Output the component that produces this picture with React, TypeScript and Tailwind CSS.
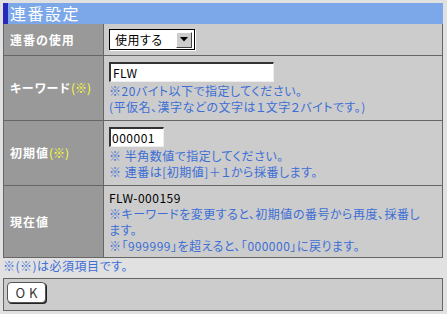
import React from "react";

const font = { fontFamily: '"Noto Sans CJK JP", "Noto Sans", sans-serif' };

function Label({ children }: { children: React.ReactNode }) {
  return (
    <div className="w-[100px] shrink-0 flex items-center pl-[6px] bg-[#999999] border-r border-[#666666] text-white font-bold text-[12px] tracking-[1px]">
      {children}
    </div>
  );
}

function Req() {
  return <span className="text-[#ffff33] font-normal tracking-normal">(※)</span>;
}

export default function App() {
  return (
    <div
      className="w-[447px] min-h-[314px] bg-[#e1e1e1] pt-[3px] pl-[3px] [font-feature-settings:'palt']"
      style={font}
    >
      <div className="w-[440px]">
        {/* title */}
        <div className="flex h-[21px] bg-[#7ca7e9]">
          <div className="w-[5px] bg-[#2828bc]" />
          <div className="pl-[2px] text-white text-[16px] leading-[21px] tracking-[1.5px]">連番設定</div>
        </div>

        {/* table */}
        <div className="border-x border-b border-[#666666] flex flex-col">
          {/* row 1 */}
          <div className="flex h-[32px] border-b border-[#666666]">
            <Label>連番の使用</Label>
            <div className="flex-1 bg-[#cccccc] flex items-center pl-[5px]">
              <div className="w-[86px] h-[21px] border border-[#000] bg-white flex items-center justify-between pl-[5px] pr-[2px] shadow-[1px_1px_0_#ffffff]">
                <span className="text-[12px] text-black leading-none tracking-[0.5px]">使用する</span>
                <div className="w-[16px] h-[16px] bg-[#cccccc] border-t border-l border-[#ffffff] border-b-[#444] border-r-[#444] border-b border-r flex items-center justify-center">
                  <svg width="8" height="5" viewBox="0 0 8 5"><polygon points="0,0 8,0 4,4.5" fill="#000" /></svg>
                </div>
              </div>
            </div>
          </div>

          {/* row 2 */}
          <div className="flex h-[65px] border-b border-[#666666]">
            <Label>キーワード<Req /></Label>
            <div className="flex-1 bg-[#cccccc] flex flex-col justify-center pl-[5px] tracking-[0.5px]">
              <div className="w-[165px] h-[20px] bg-white border-t-2 border-l-2 border-t-[#333] border-l-[#333] border-b border-r border-b-[#eee] border-r-[#eee] text-[12px] leading-[17px] pl-[2px] text-black">FLW</div>
              <div className="text-[#3c6ed6] text-[12px] leading-[16px] mt-[1px]">※20バイト以下で指定してください。</div>
              <div className="text-[#3c6ed6] text-[12px] leading-[16px]">(平仮名、漢字などの文字は１文字２バイトです。)</div>
            </div>
          </div>

          {/* row 3 */}
          <div className="flex h-[65px] border-b border-[#666666]">
            <Label>初期値<Req /></Label>
            <div className="flex-1 bg-[#cccccc] flex flex-col justify-center pl-[5px] tracking-[0.5px]">
              <div className="w-[55px] h-[20px] bg-white border-t-2 border-l-2 border-t-[#333] border-l-[#333] border-b border-r border-b-[#eee] border-r-[#eee] text-[12px] leading-[17px] pl-[1px] text-black">000001</div>
              <div className="text-[#3c6ed6] text-[12px] leading-[16px] mt-[1px]">※ 半角数値で指定してください。</div>
              <div className="text-[#3c6ed6] text-[12px] leading-[16px]">※ 連番は[初期値]＋１から採番します。</div>
            </div>
          </div>

          {/* row 4 */}
          <div className="flex h-[71px]">
            <Label>現在値</Label>
            <div className="flex-1 bg-[#cccccc] flex flex-col justify-center pl-[5px] tracking-[0.5px]">
              <div className="text-black text-[12px] leading-[16px]">FLW-000159</div>
              <div className="text-[#3c6ed6] text-[12px] leading-[16px]">
                ※キーワードを変更すると、初期値の番号から再度、採番し
                <br />
                ます。
              </div>
              <div className="text-[#3c6ed6] text-[12px] leading-[16px]">※「999999」を超えると、「000000」に戻ります。</div>
            </div>
          </div>
        </div>

        {/* note */}
        <div className="text-[#3c6ed6] text-[12px] leading-[14px] mt-[1px] tracking-[0.5px]">※(※)は必須項目です。</div>

        {/* button panel */}
        <div className="mt-[5px] h-[33px] bg-[#cccccc] border border-[#666666] pl-[3px] pt-[3px]">
          <button className="w-[39px] h-[21px] bg-white rounded-[4px] border border-[#555] shadow-[1px_1px_0_#222] text-[13px] leading-none text-[#333] tracking-[4px] pl-[4px] flex items-center justify-center">
            OK
          </button>
        </div>
      </div>
    </div>
  );
}
